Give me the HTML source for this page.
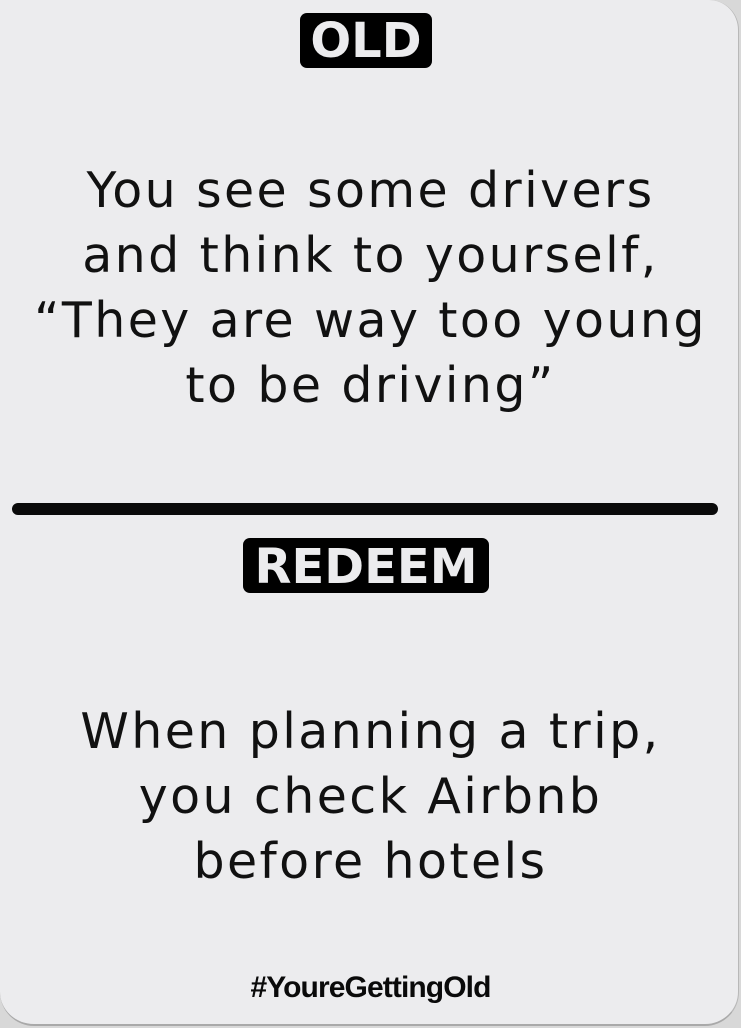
<!DOCTYPE html>
<html><head><meta charset="utf-8"><style>
html,body{margin:0;padding:0;background:#d8d8d8;}
body{width:741px;height:1028px;position:relative;overflow:hidden;}
.card{position:absolute;left:0;top:0;width:738px;height:1024px;background:#ececee;border-radius:0 30px 34px 34px;border-right:1px solid #b8b8b8;border-bottom:2px solid #a9a9a9;}
.tag{position:absolute;background:#000;color:#ececee;font-family:"DejaVu Sans","Liberation Sans",sans-serif;font-weight:bold;border-radius:7px;text-align:center;white-space:nowrap;}
.t{position:absolute;left:0;width:741px;text-align:center;font-family:"DejaVu Sans","Liberation Sans",sans-serif;font-size:49px;line-height:65px;letter-spacing:2.4px;color:#111;white-space:nowrap;}
.line{position:absolute;left:12px;top:503px;width:706px;height:12px;background:#0a0a0a;border-radius:6px;}
.hash{position:absolute;left:0;width:741px;text-align:center;top:971px;font-family:"Liberation Sans",sans-serif;font-weight:bold;font-size:30px;letter-spacing:-0.9px;color:#0a0a0a;}
</style></head><body>
<div class="card"></div>
<div class="tag" style="left:300px;top:13px;width:132px;height:55px;font-size:48px;line-height:57px;">OLD</div>
<div class="t" style="top:158px;">You see some drivers<br>and think to yourself,<br>“They are way too young<br>to be driving”</div>
<div class="line"></div>
<div class="tag" style="left:243px;top:538px;width:246px;height:55px;font-size:48px;line-height:58px;">REDEEM</div>
<div class="t" style="top:699px;">When planning a trip,<br>you check Airbnb<br>before hotels</div>
<div class="hash">#YoureGettingOld</div>
</body></html>
